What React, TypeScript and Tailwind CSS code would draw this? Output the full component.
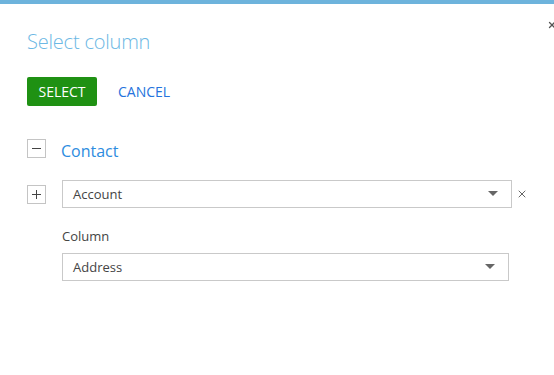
import { X } from "lucide-react";

const Caret = () => (
  <svg width="10" height="6" viewBox="0 0 10 6" className="shrink-0">
    <path d="M0 0H10L5 5Z" fill="#666" />
  </svg>
);

const Lookup = ({ value, width }: { value: string; width: string }) => (
  <div
    className={`${width} h-[28px] flex items-center justify-between pl-[10px] pr-[13px] border border-[#c9c9c9] bg-white text-[13px] text-[#444]`}
  >
    <span className="pt-[2px]">{value}</span>
    <Caret />
  </div>
);

const ToggleBox = ({ sign }: { sign: "+" | "-" }) => (
  <div className="w-[19px] h-[19px] border border-[#c4c4c4] flex items-center justify-center shrink-0">
    {sign === "-" ? (
      <span className="block w-[9px] h-px bg-[#444]" />
    ) : (
      <svg width="9" height="9" viewBox="0 0 9 9">
        <path d="M0 4.5H9M4.5 0V9" stroke="#444" strokeWidth="1" />
      </svg>
    )}
  </div>
);

export default function App() {
  return (
    <div
      className="w-[554px] h-[375px] bg-white overflow-hidden relative"
      style={{ fontFamily: '"Open Sans", "Liberation Sans", sans-serif' }}
    >
      <div className="h-[4px] bg-[#6db3dc]" />

      {/* close */}
      <button className="absolute top-[20px] right-[-3px] text-[#555]">
        <X size={10} strokeWidth={3} />
      </button>

      <div className="pl-[27px] pt-[25px] flex flex-col">
        <h1 className="text-[20px] font-light text-[#6cb8e4] leading-[26px] tracking-[-0.2px]">
          Select column
        </h1>

        <div className="mt-[22px] flex items-center gap-[21px]">
          <button className="w-[70px] h-[29px] rounded-[2px] bg-[#1f9113] text-white text-[14px] leading-none">
            SELECT
          </button>
          <button className="text-[14px] text-[#2573dd] leading-none">CANCEL</button>
        </div>

        <div className="mt-[33px] flex items-start gap-[15px]">
          <ToggleBox sign="-" />
          <span className="mt-[2px] text-[16px] text-[#2d8ce0] leading-[20px]">Contact</span>
        </div>

        <div className="mt-[19px] flex items-center">
          <ToggleBox sign="+" />
          <div className="ml-[16px]">
            <Lookup value="Account" width="w-[450px]" />
          </div>
          <X size={12} strokeWidth={2} className="ml-[4px] text-[#666]" />
        </div>

        <div className="pl-[35px] flex flex-col">
          <div className="mt-[19px] text-[13px] text-[#444] leading-[18px]">Column</div>
          <div className="mt-[8px]">
            <Lookup value="Address" width="w-[447px]" />
          </div>
        </div>
      </div>
    </div>
  );
}
